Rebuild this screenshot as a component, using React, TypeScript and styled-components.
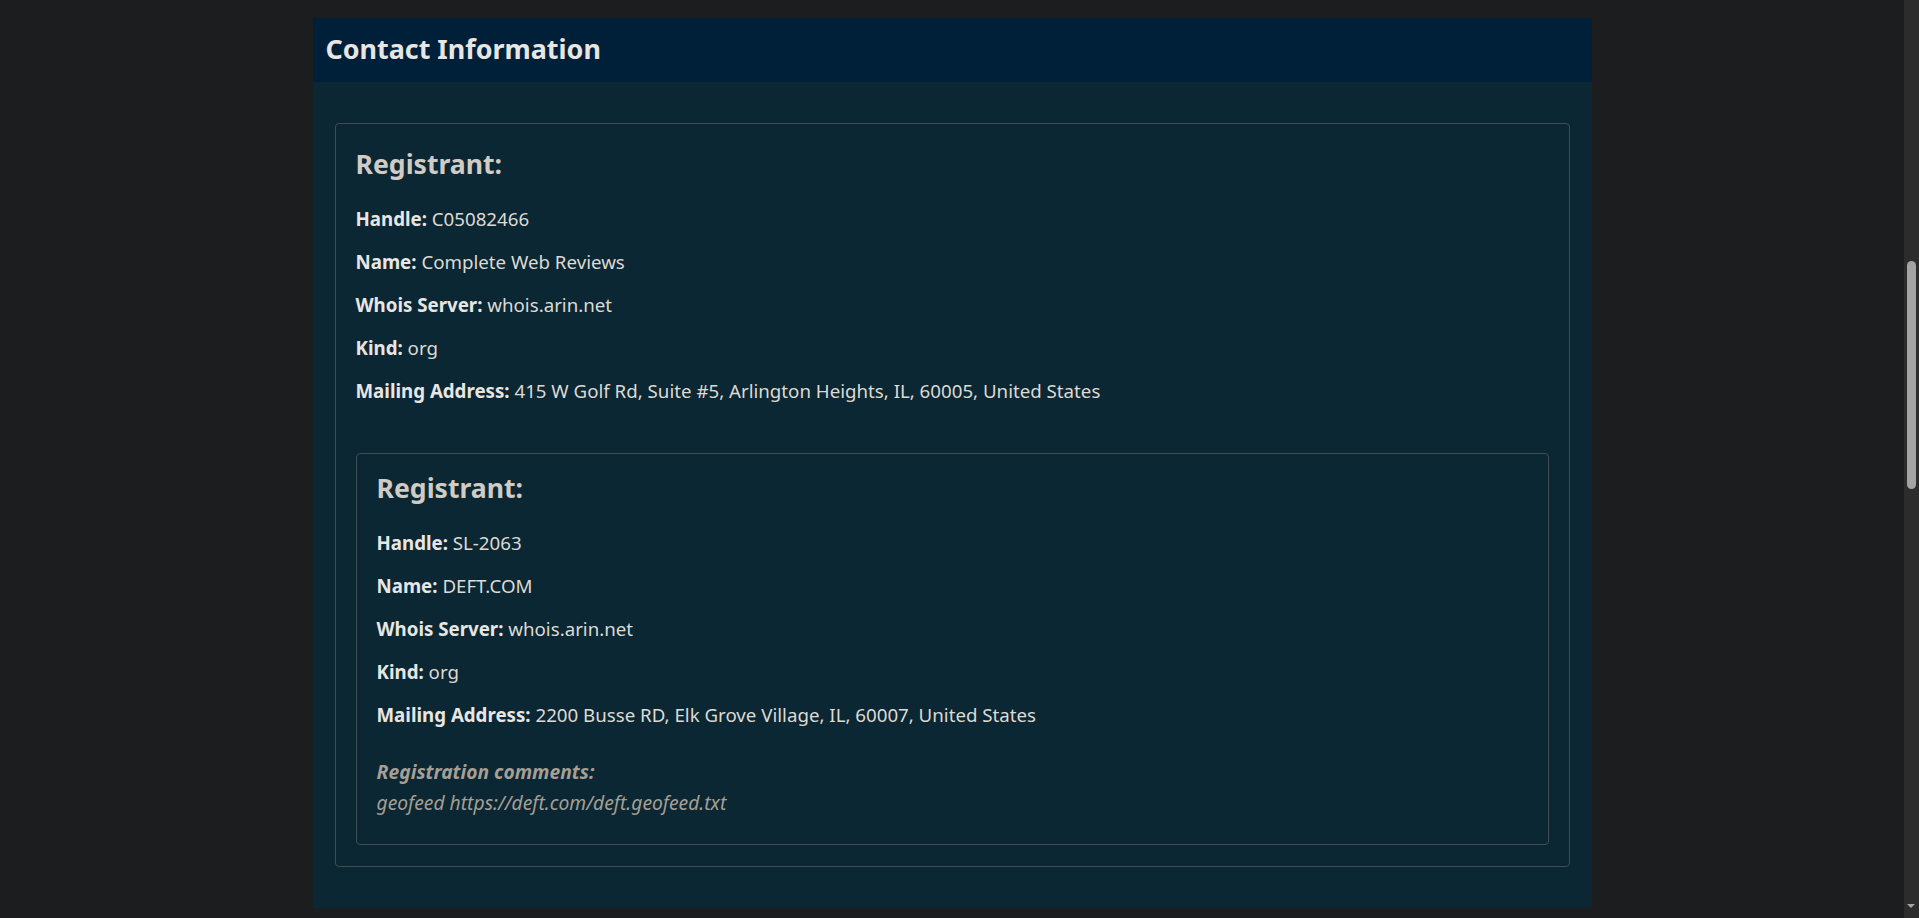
import React from "react";
import styled, { createGlobalStyle } from "styled-components";

const GlobalStyle = createGlobalStyle`
  html, body {
    margin: 0;
    padding: 0;
    background: #1c1d1e;
    overflow: hidden;
  }
  body {
    font-family: "Noto Sans", "Open Sans", sans-serif;
    color: #e8e6e3;
  }
`;

const Page = styled.div`
  display: flex;
  justify-content: center;
  padding: 18px 15px 10px 0;
`;

const Panel = styled.section`
  width: 1279px;
  display: flex;
  flex-direction: column;
`;

const PanelHeader = styled.header`
  height: 64px;
  background: #00203a;
  display: flex;
  align-items: center;
  padding: 0 13px;
  box-sizing: border-box;
`;

const PanelTitle = styled.h2`
  margin: 0;
  font-size: 26.9px;
  font-weight: 700;
  line-height: 34px;
  color: #e8e6e3;
  transform: translateY(-1px);
`;

const PanelBody = styled.div`
  background: #0a2733;
  padding: 41px 22px 41px;
`;

const Card = styled.div<{ $nested?: boolean }>`
  border: 1px solid #434c53;
  border-radius: 4px;
  padding: ${(p) => (p.$nested ? "16px 20px 26px" : "22px 20px 21px")};
  display: flex;
  flex-direction: column;
  margin-top: ${(p) => (p.$nested ? "49px" : "0")};
`;

const CardTitle = styled.h3`
  margin: 0;
  font-size: 26.6px;
  font-weight: 700;
  line-height: 36px;
  color: #d0ccc5;
`;

const Fields = styled.div`
  display: flex;
  flex-direction: column;
  gap: 16px;
  margin-top: 23px;
`;

const Field = styled.p`
  margin: 0;
  font-size: 18.7px;
  line-height: 27px;
  color: #dedad4;
`;

const Label = styled.strong`
  font-weight: 700;
  color: #e8e6e3;
`;

const Comments = styled.div`
  margin-top: 28px;
  font-size: 19.25px;
  line-height: 31px;
  font-style: italic;
  color: #a69f95;
`;

const CommentsLabel = styled.div`
  font-weight: 700;
`;

const ScrollTrack = styled.div`
  position: fixed;
  top: 0;
  right: 0;
  width: 15px;
  height: 100vh;
  background: #2c2c2c;
`;

const ScrollThumb = styled.div`
  position: absolute;
  left: 3px;
  top: 261px;
  width: 9px;
  height: 228px;
  border-radius: 5px;
  background: #a3a3a3;
`;

const ScrollArrow = styled.div`
  position: absolute;
  left: 3px;
  bottom: 10px;
  width: 0;
  height: 0;
  border-left: 4.5px solid transparent;
  border-right: 4.5px solid transparent;
  border-top: 4px solid #a3a3a3;
`;

type Contact = {
  handle: string;
  name: string;
  server: string;
  kind: string;
  address: string;
};

const ContactFields: React.FC<{ c: Contact }> = ({ c }) => (
  <Fields>
    <Field>
      <Label>Handle:</Label> {c.handle}
    </Field>
    <Field>
      <Label>Name:</Label> {c.name}
    </Field>
    <Field>
      <Label>Whois Server:</Label> {c.server}
    </Field>
    <Field>
      <Label>Kind:</Label> {c.kind}
    </Field>
    <Field>
      <Label>Mailing Address:</Label> {c.address}
    </Field>
  </Fields>
);

const outer: Contact = {
  handle: "C05082466",
  name: "Complete Web Reviews",
  server: "whois.arin.net",
  kind: "org",
  address: "415 W Golf Rd, Suite #5, Arlington Heights, IL, 60005, United States",
};

const inner: Contact = {
  handle: "SL-2063",
  name: "DEFT.COM",
  server: "whois.arin.net",
  kind: "org",
  address: "2200 Busse RD, Elk Grove Village, IL, 60007, United States",
};

export default function App() {
  return (
    <>
      <GlobalStyle />
      <Page>
        <Panel>
          <PanelHeader>
            <PanelTitle>Contact Information</PanelTitle>
          </PanelHeader>
          <PanelBody>
            <Card>
              <CardTitle>Registrant:</CardTitle>
              <ContactFields c={outer} />
              <Card $nested>
                <CardTitle>Registrant:</CardTitle>
                <ContactFields c={inner} />
                <Comments>
                  <CommentsLabel>Registration comments:</CommentsLabel>
                  <div>geofeed https://deft.com/deft.geofeed.txt</div>
                </Comments>
              </Card>
            </Card>
          </PanelBody>
        </Panel>
      </Page>
      <ScrollTrack aria-hidden>
        <ScrollThumb />
        <ScrollArrow />
      </ScrollTrack>
    </>
  );
}
